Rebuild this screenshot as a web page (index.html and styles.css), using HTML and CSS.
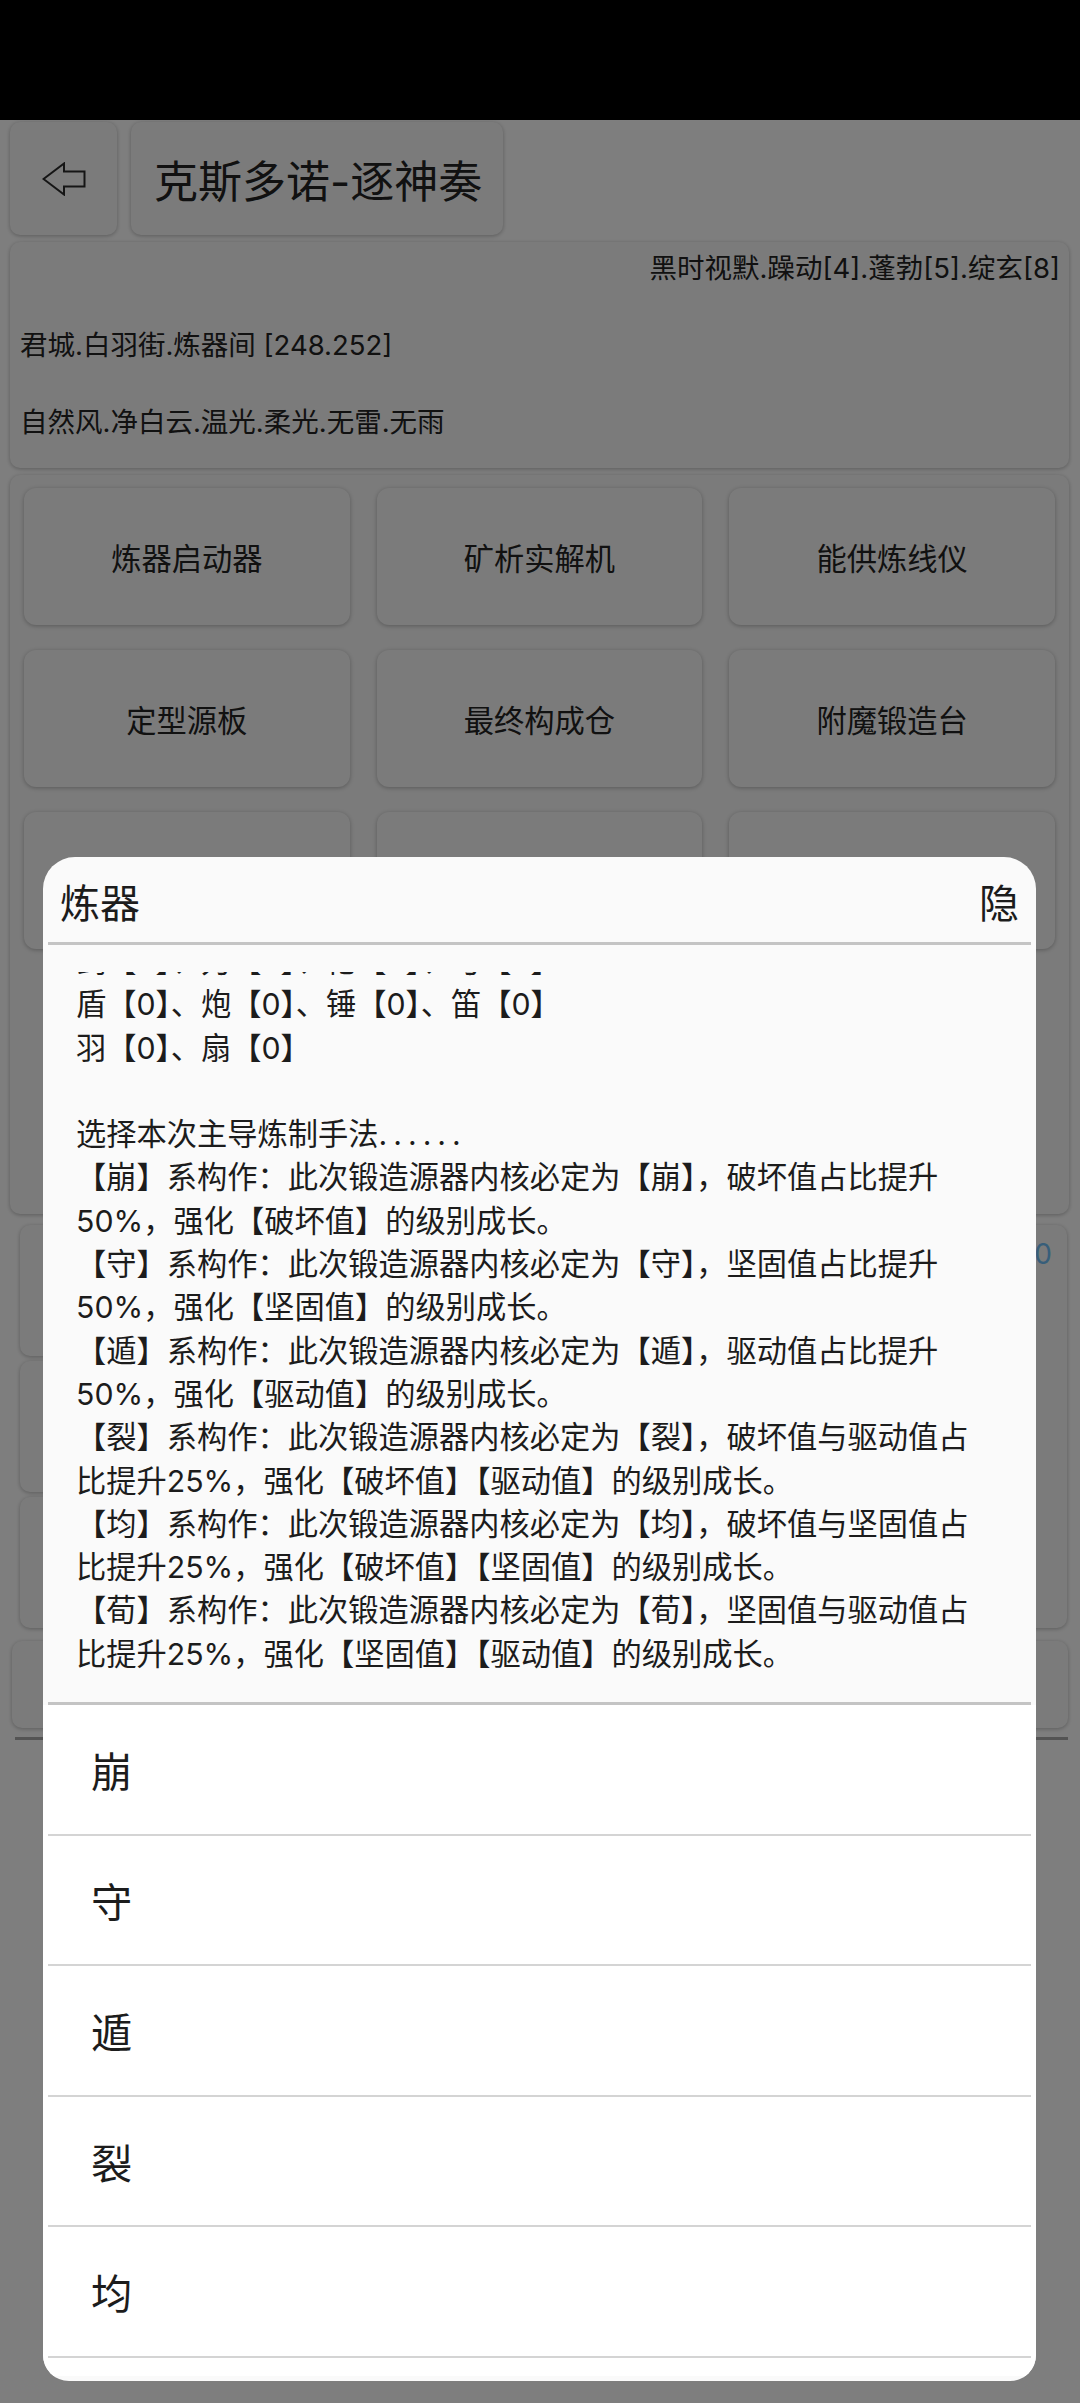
FILE: index.html
```html
<!DOCTYPE html>
<html lang="zh-CN">
<head>
    <meta charset="UTF-8">
    <meta name="viewport" content="width=device-width, initial-scale=1.0">
    <title>克斯多诺-逐神奏</title>
    <link rel="stylesheet" href="styles.css">
</head>
<body>

    <div class="status-bar"></div>

    <header class="top-bar">
        <div class="card back-btn">
            <svg width="44" height="34" viewBox="0 0 44 34">
                <path d="M1.5 17 L22 1.5 V9.5 H42.5 V24.5 H22 V32.5 Z" fill="none" stroke="#2a2a2a" stroke-width="2"/>
            </svg>
        </div>
        <div class="card title-card">克斯多诺-逐神奏</div>
    </header>

    <section class="card info-card">
        <p class="time-state">黑时视默.躁动[4].蓬勃[5].绽玄[8]</p>
        <p>君城.白羽街.炼器间 [248.252]</p>
        <p>自然风.净白云.温光.柔光.无雷.无雨</p>
    </section>

    <section class="card tool-panel">
        <div class="card tool">炼器启动器</div>
        <div class="card tool">矿析实解机</div>
        <div class="card tool">能供炼线仪</div>
        <div class="card tool">定型源板</div>
        <div class="card tool">最终构成仓</div>
        <div class="card tool">附魔锻造台</div>
        <div class="card tool"></div>
        <div class="card tool"></div>
        <div class="card tool"></div>
    </section>

    <section class="lower">
        <div class="slot-list">
            <div class="card slot"></div>
            <div class="card slot"></div>
            <div class="card slot"></div>
        </div>
        <div class="card counter-card"><span class="counter">0</span></div>
    </section>

    <div class="card wide-card"></div>
    <div class="rule"></div>

    <!-- 炼器弹窗 -->
    <div class="scrim"></div>
    <div class="dialog">
        <div class="dialog-head">
            <span>炼器</span>
            <span>隐</span>
        </div>
        <div class="dialog-body">
            <div class="log-view">
                <div class="log">剑【0】、刀【0】、枪【0】、弓【0】
盾【0】、炮【0】、锤【0】、笛【0】
羽【0】、扇【0】

选择本次主导炼制手法<span class="dots">......</span>
【崩】系构作：此次锻造源器内核必定为【崩】，破坏值占比提升50%，强化【破坏值】的级别成长。
【守】系构作：此次锻造源器内核必定为【守】，坚固值占比提升50%，强化【坚固值】的级别成长。
【遁】系构作：此次锻造源器内核必定为【遁】，驱动值占比提升50%，强化【驱动值】的级别成长。
【裂】系构作：此次锻造源器内核必定为【裂】，破坏值与驱动值占比提升25%，强化【破坏值】【驱动值】的级别成长。
【均】系构作：此次锻造源器内核必定为【均】，破坏值与坚固值占比提升25%，强化【破坏值】【坚固值】的级别成长。
【荀】系构作：此次锻造源器内核必定为【荀】，坚固值与驱动值占比提升25%，强化【坚固值】【驱动值】的级别成长。</div>
            </div>
        </div>
        <ul class="options">
            <li>崩</li>
            <li>守</li>
            <li>遁</li>
            <li>裂</li>
            <li>均</li>
            <li>荀</li>
        </ul>
    </div>

</body>
</html>
```

FILE: styles.css
```css
* {
    box-sizing: border-box;
}

body {
    margin: 0;
    width: 1080px;
    height: 2403px;
    overflow: hidden;
    position: relative;
    background: #fdfdfd;
    font-family: Inter, "Noto Sans CJK SC", sans-serif;
    color: #222;
}

.status-bar {
    height: 120px;
    background: #000;
}

.card {
    background: #f6f6f6;
    border-radius: 10px;
    box-shadow: 0 1px 4px rgba(0,0,0,0.28);
}

/* top bar */
.top-bar {
    display: flex;
    gap: 14px;
    height: 115px;
    padding: 2px 0 0 10px;
}

.back-btn {
    width: 107px;
    display: flex;
    align-items: center;
    justify-content: center;
}

.title-card {
    display: flex;
    align-items: center;
    padding: 0 21px 0 23px;
    font-size: 44px;
}

/* info */
.info-card {
    margin: 7px 11px 0 10px;
    height: 226px;
    padding: 0 9px 0 10px;
    display: flex;
    flex-direction: column;
    gap: 25px;
    font-size: 27.5px;
}

.info-card p {
    margin: 0;
    line-height: 52px;
}

.time-state {
    text-align: right;
}

/* tools */
.tool-panel {
    margin: 7px 11px 0 10px;
    height: 739px;
    padding: 13px 14px;
    display: grid;
    grid-template-columns: repeat(3, 1fr);
    grid-auto-rows: 137px;
    gap: 25px 27px;
    align-content: start;
}

.tool {
    display: flex;
    align-items: center;
    justify-content: center;
    font-size: 30.25px;
    border-radius: 12px;
}

.lower {
    margin: 11px 13px 0 20px;
    height: 403px;
    display: flex;
    gap: 14px;
}

.slot-list {
    width: 640px;
    display: flex;
    flex-direction: column;
    gap: 5px;
}

.slot {
    flex: 1;
}

.counter-card {
    flex: 1;
    text-align: right;
    padding: 9px 15px 0 0;
    font-size: 28px;
    line-height: 40px;
}

.counter {
    color: #6fbdf5;
}

.wide-card {
    margin: 13px 12px 0 12px;
    height: 87px;
}

.rule {
    margin: 9px 12px 0 15px;
    height: 3px;
    background: #a8a8a8;
}

/* dialog */
.scrim {
    position: absolute;
    top: 0;
    left: 0;
    right: 0;
    bottom: 0;
    background: rgba(0,0,0,0.5);
}

.dialog {
    position: absolute;
    left: 43px;
    top: 857px;
    width: 993px;
    height: 1524px;
    padding-bottom: 5px;
    background: #fafafa;
    border-radius: 32px 32px 26px 26px;
    overflow: hidden;
    display: flex;
    flex-direction: column;
    color: #1c1c1c;
}

.dialog-head {
    margin: 0 5px;
    height: 88px;
    padding: 2px 12px 0;
    border-bottom: 3px solid #c4c4c4;
    display: flex;
    justify-content: space-between;
    align-items: center;
    font-size: 40px;
    flex: none;
}

.dialog-body {
    margin: 0 5px;
    height: 760px;
    padding: 27px 45px 26px 28px;
    border-bottom: 3px solid #c4c4c4;
    flex: none;
}

/* scrolled to the bottom: older lines overflow at the top */
.log-view {
    height: 704px;
    overflow: hidden;
    display: flex;
    flex-direction: column;
    justify-content: flex-end;
}

.log {
    flex: none;
    font-size: 30.25px;
    line-height: 43.3px;
    white-space: pre-line;
}

.dots {
    letter-spacing: 6px;
}

.options {
    flex: 1;
    margin: 0;
    padding: 0;
    list-style: none;
    background: #fff;
    overflow: hidden;
}

.options li {
    margin: 0 5px;
    height: 130.5px;
    padding: 6px 0 0 43px;
    border-bottom: 2px solid #d4d4d4;
    font-size: 41.25px;
    line-height: 122.5px;
}
```
